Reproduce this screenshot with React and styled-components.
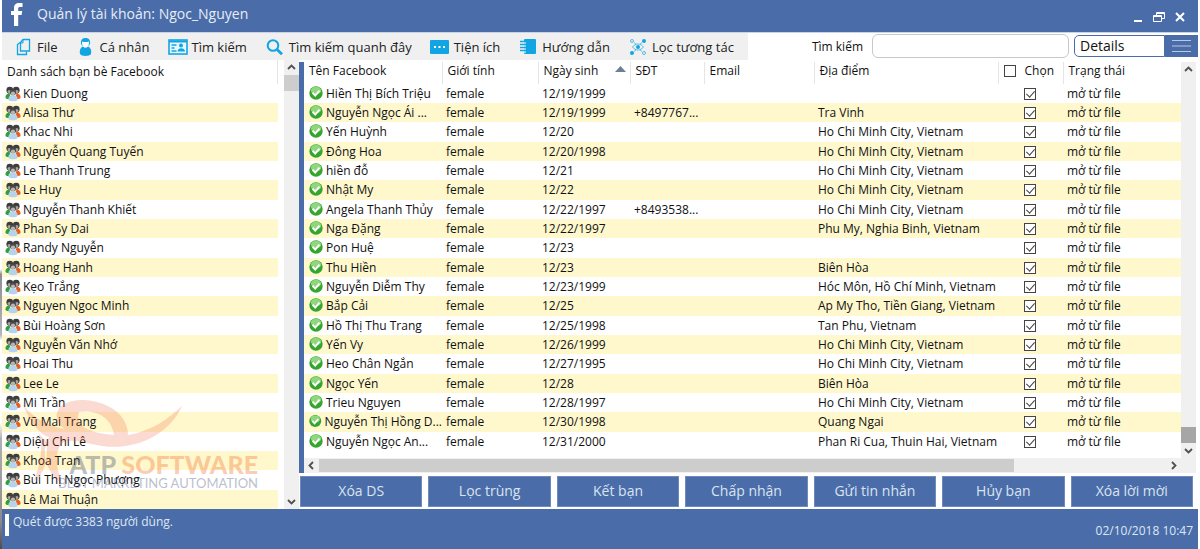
import React from "react";
import styled, { createGlobalStyle } from "styled-components";

const BLUE = "#4a6da9";
const YELLOW = "#fff8cd";
const GRAY = "#f0f0f0";
const CYAN = "#12a5e4";
const LINE = "#e5e5e5";

const GlobalStyle = createGlobalStyle`
  * {
    box-sizing: border-box;
  }

  body {
    margin: 0;
    background: #fff;
    color: #111;
    font-family: "Open Sans", "Noto Sans", sans-serif;
    font-size: 12px;
    line-height: 16px;
  }

  button,
  input,
  select {
    font-family: inherit;
    color: inherit;
  }
`;

const Window = styled.div`
  display: flex;
  flex-direction: column;
  min-height: 100vh;
  border: solid transparent;
  border-width: 0 2px;
  background:
    linear-gradient(#fff 49%, #8d8d92 50%, #b5b5ba 61%, #fff 62%, #fff 77%, #b0b0b4 80%, #8a8a8e 95%, #4b4b50) left / 2px 100% no-repeat border-box,
    #fff;
`;

const TitleBar = styled.header`
  display: flex;
  align-items: center;
  height: 33px;
  padding: 0 12px 4px 8px;
  background: ${BLUE};
  border-bottom: 1px solid #c9d3e6;
  color: #e6ecf6;
`;

const Title = styled.h1`
  flex: 1;
  margin: 0 0 0 13px;
  font-size: 14px;
  font-weight: 400;
  line-height: 20px;
`;

const WindowButtons = styled.div`
  display: flex;
  gap: 8px;
  padding-top: 6px;
`;

const PlainButton = styled.button`
  display: flex;
  align-items: center;
  justify-content: center;
  padding: 0;
  border: 0;
  background: none;
`;

const TopRow = styled.div`
  display: flex;
  height: 27px;
`;

const Menu = styled.nav`
  display: flex;
  align-items: center;
  gap: 18px;
  padding: 0 14px 0 11px;
  background: ${GRAY};
`;

const MenuButton = styled(PlainButton)`
  gap: 4px;
  color: #222;
  font-size: 13px;
  line-height: 20px;
  white-space: nowrap;
`;

const SearchBar = styled.form`
  display: flex;
  flex: 1;
  align-items: flex-start;
  justify-content: flex-end;
  padding-top: 1px;
`;

const SearchLabel = styled.label`
  margin-right: 9px;
  line-height: 26px;
`;

const SearchInput = styled.input`
  width: 197px;
  height: 24px;
  margin-right: 5px;
  border: 1px solid #c8c8c8;
  border-radius: 6px;
  background: #fff;
`;

const ViewSelect = styled.select`
  appearance: none;
  width: 91px;
  height: 22px;
  margin-top: 1px;
  padding: 0 5px;
  border: 1px solid ${BLUE};
  border-radius: 5px 0 0 5px;
  background: #fff;
  font-size: 14px;
  line-height: 20px;
`;

const MenuToggle = styled(PlainButton)`
  width: 33px;
  height: 22px;
  margin-top: 1px;
  background: ${BLUE};
`;

const Body = styled.main`
  display: flex;
`;

const FriendsPane = styled.section`
  position: relative;
  display: flex;
  flex: 0 0 297px;
`;

const FriendsColumn = styled.div`
  flex: 1;
  margin-right: 6px;
`;

const FriendsHeader = styled.h2`
  height: 24px;
  margin: 0;
  padding-left: 5px;
  border-right: 1px solid ${LINE};
  font-size: 12px;
  font-weight: 400;
  line-height: 24px;
`;

const FriendList = styled.ul`
  margin: 0;
  padding: 0;
  list-style: none;
`;

const Friend = styled.li`
  display: flex;
  align-items: center;
  gap: 2px;
  height: 19px;
  padding-left: 3px;
  line-height: 20px;

  &:nth-child(3n) {
    height: 20px;
  }

  &:nth-child(even) {
    background: ${YELLOW};
  }
`;

const Watermark = styled.div`
  position: absolute;
  left: 20px;
  bottom: 18px;
  width: 240px;
  pointer-events: none;
`;

const WatermarkText = styled.div`
  position: absolute;
  right: 4px;
  bottom: 0;
  font-family: Lato, sans-serif;
  text-align: right;
  white-space: nowrap;
  opacity: 0.32;
`;

const WatermarkName = styled.div`
  color: #f26522;
  font-size: 25px;
  font-weight: 900;
  line-height: 22px;

  span {
    color: #2b3a67;
  }
`;

const WatermarkTag = styled.div`
  color: #2b3a67;
  font-size: 13px;
  line-height: 16px;
`;

const VScroll = styled.div`
  display: flex;
  flex: 0 0 15px;
  flex-direction: column;
  justify-content: space-between;
  background: ${GRAY};
`;

const ScrollGroup = styled.div`
  display: flex;
  flex-direction: column;
`;

const ScrollButton = styled(PlainButton)`
  width: 15px;
  height: 15px;
`;

const VThumb = styled.div`
  height: 16px;
  background: ${(p) => (p.$dark ? "#a6a6a6" : "#cdcdcd")};
`;

const HScroll = styled.div`
  display: flex;
  align-items: center;
  height: 15px;
  padding-right: 15px;
  background: ${GRAY};
`;

const HTrack = styled.div`
  flex: 1;
  height: 13px;
`;

const HThumb = styled.div`
  width: 82%;
  height: 100%;
  background: #cdcdcd;
`;

const MembersPane = styled.section`
  flex: 1;
  min-width: 0;
  padding-top: 2px;
`;

const GridFrame = styled.div`
  margin-right: 2px;
  border-left: 5px solid ${BLUE};
`;

const GridRow = styled.div`
  display: flex;
`;

const TableWrap = styled.div`
  flex: 1;
  min-width: 0;
  padding-bottom: 7px;
`;

const Table = styled.table`
  width: 100%;
  border-collapse: collapse;
  table-layout: fixed;
`;

const Th = styled.th`
  width: ${(p) => p.$width || "auto"};
  height: 22px;
  padding: 0 4px 4px 5px;
  border-right: ${(p) => (p.$last ? "0" : `1px solid ${LINE}`)};
  font-weight: 400;
  line-height: 16px;
  text-align: left;
  white-space: nowrap;
`;

const HeadLine = styled.span`
  display: flex;
  align-items: center;
  justify-content: ${(p) => (p.$spread ? "space-between" : "flex-start")};
  gap: 9px;
`;

const Tr = styled.tr`
  height: 19px;

  &:nth-child(3n) {
    height: 20px;
  }

  &:nth-child(even) {
    background: ${YELLOW};
  }
`;

const Td = styled.td`
  padding: 0 0 0 ${(p) => p.$indent || "4px"};
  overflow: hidden;
  line-height: 18px;
  white-space: nowrap;
`;

const NameCell = styled.span`
  display: flex;
  align-items: center;
  gap: 3px;
`;

const Check = styled.input`
  appearance: none;
  position: relative;
  display: block;
  width: 12px;
  height: 12px;
  margin: 0;
  border: 1px solid #444;
  background: #fff;

  &:checked::after {
    content: "";
    position: absolute;
    left: 3px;
    top: 0;
    width: 4px;
    height: 7px;
    border: solid #444;
    border-width: 0 1px 1px 0;
    transform: rotate(42deg);
  }
`;

const Actions = styled.div`
  display: flex;
  gap: 6px;
  padding: 3px 5px 2px 1px;
`;

const ActionButton = styled.button`
  flex: 1;
  height: 31px;
  padding: 0 0 2px;
  border: 1px solid #6f8bbd;
  background: ${BLUE};
  color: #dbe3f1;
  font-size: 14px;
  line-height: 20px;
`;

const StatusBar = styled.footer`
  display: flex;
  flex: 1;
  justify-content: space-between;
  padding: 5px 5px 10px 3px;
  background: ${BLUE};
  color: #dfe6f3;
`;

const StatusText = styled.p`
  height: 22px;
  margin: 0;
  padding-left: 4px;
  border-left: 4px solid #fff;
`;

const Clock = styled.time`
  align-self: flex-end;
`;

const FacebookIcon = () => (
  <svg width="14" height="24" viewBox="0 0 14 24" aria-hidden="true">
    <path
      d="M4 24V13H1V9h3V6.200C4 2.500 6 1 9 1h3.500v4H10C8.600 5 8.200 5.600 8.200 6.800V9h4l-.6 4H8.200v11z"
      fill="#fff"
    />
  </svg>
);

const FileIcon = () => (
  <svg width="20" height="18" viewBox="0 0 20 18" fill="none" stroke={CYAN} aria-hidden="true">
    <path d="M10 1.500h6.500v11.500H7.500V4.500z" strokeWidth="1.300" />
    <path d="M7 4.500L4.500 6.500v10h9V13.500" strokeWidth="1.300" />
    <path d="M7.500 5H10V2" strokeWidth="1" />
  </svg>
);

const PersonIcon = () => (
  <svg width="20" height="20" viewBox="0 0 20 20" aria-hidden="true">
    <path d="M5 7C4.600 3 6 1 9.500 1S14.400 3 14 7l-1.500 2h-6z" fill={CYAN} />
    <path d="M6 4.500c1.500.8 5 .8 7 0 .3 3.500-1 6-3.500 6S5.800 8 6 4.500z" fill="#fff" />
    <path d="M4 17c-.8-4 .4-6.500 3-7.500 1.500 1.800 3.500 1.800 5 0 2.600 1 3.800 3.500 3 7.500-1.500 2.600-9.500 2.600-11 0z" fill={CYAN} />
  </svg>
);

const CardIcon = () => (
  <svg width="20" height="16" viewBox="0 0 20 16" aria-hidden="true">
    <rect x="1" y="1" width="18" height="14" fill="#e8f7fe" stroke={CYAN} strokeWidth="1.600" />
    <path d="M1 2.500h18" stroke={CYAN} strokeWidth="2" />
    <path d="M3.500 6h5M3.500 9h3M3.500 12h5" stroke={CYAN} strokeWidth="1.300" />
    <circle cx="13" cy="6.500" r="2" fill={CYAN} />
    <path d="M9.500 12.500c0-4.500 7.500-4.500 7.500 0z" fill={CYAN} />
  </svg>
);

const SearchIcon = () => (
  <svg width="20" height="18" viewBox="0 0 20 18" fill="none" stroke={CYAN} aria-hidden="true">
    <circle cx="8" cy="7.500" r="5.300" strokeWidth="2" />
    <path d="M12 11.500l5 4.800" strokeWidth="2.800" />
  </svg>
);

const DotsIcon = () => (
  <svg width="20" height="14" viewBox="0 0 20 14" aria-hidden="true">
    <rect width="19" height="14" y="0" rx="1" fill={CYAN} />
    <path d="M4 6h2v2H4zM8.500 6h2v2h-2zM13 6h2v2h-2z" fill="#fff" />
  </svg>
);

const BookIcon = () => (
  <svg width="20" height="17" viewBox="0 0 20 17" aria-hidden="true">
    <rect x="6" y="1" width="12" height="15" rx="1" fill={CYAN} />
    <path d="M2 3.500h5M2 6.500h5M2 9.500h5M2 12.500h5" stroke={CYAN} strokeWidth="1.400" />
    <path d="M5.500 5h2.500M5.500 8h2.500M5.500 11h2.500M5.500 14h2.500" stroke="#fff" strokeWidth="1" />
  </svg>
);

const NetworkIcon = () => (
  <svg width="20" height="18" viewBox="0 0 20 18" fill="none" stroke={CYAN} aria-hidden="true">
    <path d="M4.500 9c3-4 8-4 11 0-3 4-8 4-11 0z" strokeWidth=".7" />
    <path d="M6 4.500l2 1.500M14 13.500l-2-1.500M14 4.500l-2 1.500M6 13.500l2-1.500" strokeWidth=".6" />
    <circle cx="10" cy="9" r="2" fill={CYAN} stroke="none" />
    <circle cx="4" cy="3" r="1.500" strokeWidth=".7" />
    <circle cx="16" cy="15" r="1.500" strokeWidth=".7" />
    <circle cx="16" cy="3" r="2" fill={CYAN} stroke="none" />
    <circle cx="4" cy="15" r="2" fill={CYAN} stroke="none" />
  </svg>
);

const PeopleIcon = () => (
  <svg width="16" height="16" viewBox="0 0 16 16" aria-hidden="true">
    <path d="M.5 12c-.3-3 1.300-4.500 4-4.500L6 12.500C4 13.300 1.500 13.200.5 12z" fill="#2f9e3c" />
    <path d="M15.500 12c.3-3-1.300-4.500-4-4.500L10 12.500c2 .8 4.500.7 5.500-.5z" fill="#ea5b1c" />
    <circle cx="4.800" cy="4.200" r="3.400" fill="#3d3d3d" />
    <circle cx="11.200" cy="4.200" r="3.400" fill="#3d3d3d" />
    <ellipse cx="4.200" cy="5.600" rx="1.600" ry="1.500" fill="#aaa5a2" />
    <ellipse cx="11.800" cy="5.600" rx="1.600" ry="1.500" fill="#aaa5a2" />
    <circle cx="8" cy="6.600" r="3" fill="#4a4a4a" />
    <circle cx="8" cy="7.600" r="2.100" fill="#b9b4b1" />
    <path d="M3.300 13.700c0-3.200 1.500-4.500 4.700-4.500s4.700 1.300 4.700 4.500c-1.500 2-7.900 2-9.400 0z" fill="#b5d3ec" />
  </svg>
);

const OkIcon = () => (
  <svg width="14" height="16" viewBox="0 0 14 16" aria-hidden="true">
    <circle cx="7" cy="7" r="6.700" fill="#35a52e" />
    <ellipse cx="7" cy="4.600" rx="5.200" ry="3.800" fill="#8fd67c" />
    <path d="M3.600 6.800l2.600 2.800 4.300-5" fill="none" stroke="#fff" strokeWidth="2" />
  </svg>
);

const ARROWS = {
  up: "M4 9l3.500-3.500L11 9",
  down: "M4 6l3.500 3.500L11 6",
  left: "M9 4L5.500 7.500 9 11",
  right: "M6 4l3.500 3.500L6 11",
};

const Arrow = ({ dir }) => (
  <svg width="15" height="15" viewBox="0 0 15 15" aria-hidden="true">
    <path d={ARROWS[dir]} fill="none" stroke="#505050" strokeWidth="1.800" />
  </svg>
);

const WatermarkLogo = () => (
  <svg width="240" height="90" viewBox="0 0 240 90" opacity=".2" aria-hidden="true">
    <path
      fill="#f04a26"
      fillRule="evenodd"
      d="M1 8C12 22 26 28 42 32C26 17 38 2 62 3C90 5 106 20 106 38C130 34 146 22 160 9C148 36 116 54 80 49C56 45 38 36 35 58C34 68 37 78 40 87C24 74 18 56 27 40C16 37 7 22 1 8ZM57 15C52 28 66 36 92 38C90 22 76 12 57 15ZM16 36C22 46 19 66 12 84C22 78 27 62 24 44Z"
    />
  </svg>
);

const MENU = [
  ["File", FileIcon],
  ["Cá nhân", PersonIcon],
  ["Tìm kiếm", CardIcon],
  ["Tìm kiếm quanh đây", SearchIcon],
  ["Tiện ích", DotsIcon],
  ["Hướng dẫn", BookIcon],
  ["Lọc tương tác", NetworkIcon],
];

const FRIENDS = [
  "Kien Duong",
  "Alisa Thư",
  "Khac Nhi",
  "Nguyễn Quang Tuyến",
  "Le Thanh Trung",
  "Le Huy",
  "Nguyễn Thanh Khiết",
  "Phan Sy Dai",
  "Randy Nguyễn",
  "Hoang Hanh",
  "Kẹo Trắng",
  "Nguyen Ngoc Minh",
  "Bùi Hoàng Sơn",
  "Nguyễn Văn Nhớ",
  "Hoai Thu",
  "Lee Le",
  "Mi Trần",
  "Vũ Mai Trang",
  "Diệu Chi Lê",
  "Khoa Tran",
  "Bùi Thị Ngọc Phượng",
  "Lê Mai Thuận",
];

const HCM = "Ho Chi Minh City, Vietnam";

// name, birthday, phone, place
const MEMBERS = [
  ["Hiền Thị Bích Triệu", "12/19/1999", "", ""],
  ["Nguyễn Ngọc Ái ...", "12/19/1999", "+8497767...", "Tra Vinh"],
  ["Yến Huỳnh", "12/20", "", HCM],
  ["Đông Hoa", "12/20/1998", "", HCM],
  ["hiền đỗ", "12/21", "", HCM],
  ["Nhật My", "12/22", "", HCM],
  ["Angela Thanh Thủy", "12/22/1997", "+8493538...", HCM],
  ["Nga Đặng", "12/22/1997", "", "Phu My, Nghia Binh, Vietnam"],
  ["Pon Huệ", "12/23", "", ""],
  ["Thu Hiền", "12/23", "", "Biên Hòa"],
  ["Nguyễn Diễm Thy", "12/23/1999", "", "Hóc Môn, Hồ Chí Minh, Vietnam"],
  ["Bắp Cải", "12/25", "", "Ap My Tho, Tiền Giang, Vietnam"],
  ["Hồ Thị Thu Trang", "12/25/1998", "", "Tan Phu, Vietnam"],
  ["Yến Vy", "12/26/1999", "", HCM],
  ["Heo Chân Ngắn", "12/27/1995", "", HCM],
  ["Ngọc Yến", "12/28", "", "Biên Hòa"],
  ["Trieu Nguyen", "12/28/1997", "", HCM],
  ["Nguyễn Thị Hồng D...", "12/30/1998", "", "Quang Ngai"],
  ["Nguyễn Ngọc An...", "12/31/2000", "", "Phan Ri Cua, Thuin Hai, Vietnam"],
];

const ACTIONS = ["Xóa DS", "Lọc trùng", "Kết bạn", "Chấp nhận", "Gửi tin nhắn", "Hủy bạn", "Xóa lời mời"];

const FriendsPanel = () => (
  <FriendsPane>
    <FriendsColumn>
      <FriendsHeader>Danh sách bạn bè Facebook</FriendsHeader>
      <FriendList>
        {FRIENDS.map((name) => (
          <Friend key={name}>
            <PeopleIcon />
            {name}
          </Friend>
        ))}
      </FriendList>
    </FriendsColumn>
    <VScroll>
      <ScrollGroup>
        <ScrollButton type="button" aria-label="Lên">
          <Arrow dir="up" />
        </ScrollButton>
        <VThumb />
      </ScrollGroup>
      <ScrollButton type="button" aria-label="Xuống">
        <Arrow dir="down" />
      </ScrollButton>
    </VScroll>
    <Watermark>
      <WatermarkLogo />
      <WatermarkText>
        <WatermarkName>
          <span>ATP</span> SOFTWARE
        </WatermarkName>
        <WatermarkTag>BEST MARKETING AUTOMATION</WatermarkTag>
      </WatermarkText>
    </Watermark>
  </FriendsPane>
);

const MembersTable = () => (
  <Table>
    <thead>
      <tr>
        <Th $width="138px">Tên Facebook</Th>
        <Th $width="96px">Giới tính</Th>
        <Th $width="92px">
          <HeadLine $spread>
            Ngày sinh
            <svg width="11" height="10" viewBox="0 0 11 10" aria-hidden="true">
              <path d="M0 6l5.500-6L11 6z" fill="#6d7f95" />
            </svg>
          </HeadLine>
        </Th>
        <Th $width="74px">SĐT</Th>
        <Th $width="110px">Email</Th>
        <Th>Địa điểm</Th>
        <Th $width="65px">
          <HeadLine>
            <Check type="checkbox" id="check-all" />
            <label htmlFor="check-all">Chọn</label>
          </HeadLine>
        </Th>
        <Th $width="118px" $last>
          Trạng thái
        </Th>
      </tr>
    </thead>
    <tbody>
      {MEMBERS.map(([name, birthday, phone, place]) => (
        <Tr key={name}>
          <Td $indent="5px">
            <NameCell>
              <OkIcon />
              {name}
            </NameCell>
          </Td>
          <Td>female</Td>
          <Td>{birthday}</Td>
          <Td>{phone}</Td>
          <Td />
          <Td>{place}</Td>
          <Td $indent="26px">
            <Check type="checkbox" defaultChecked aria-label={name} />
          </Td>
          <Td>mở từ file</Td>
        </Tr>
      ))}
    </tbody>
  </Table>
);

const App = () => (
  <>
    <GlobalStyle />
    <Window>
      <TitleBar>
        <FacebookIcon />
        <Title>Quản lý tài khoản: Ngoc_Nguyen</Title>
        <WindowButtons>
          <PlainButton type="button" aria-label="Thu nhỏ">
            <svg width="12" height="14" viewBox="0 0 12 14" aria-hidden="true">
              <path d="M2 11h8" stroke="#fff" strokeWidth="2" />
            </svg>
          </PlainButton>
          <PlainButton type="button" aria-label="Khôi phục">
            <svg width="14" height="14" viewBox="0 0 14 14" fill="none" stroke="#fff" aria-hidden="true">
              <path d="M4.500 5V2.500h8v6H10M4.500 3.500h8M1.500 5.500h8v6h-8zM1.500 6.500h8" />
            </svg>
          </PlainButton>
          <PlainButton type="button" aria-label="Đóng">
            <svg width="12" height="14" viewBox="0 0 12 14" aria-hidden="true">
              <path d="M2 3l8 8M10 3l-8 8" stroke="#fff" strokeWidth="2" />
            </svg>
          </PlainButton>
        </WindowButtons>
      </TitleBar>

      <TopRow>
        <Menu>
          {MENU.map(([label, Icon]) => (
            <MenuButton key={label} type="button">
              <Icon />
              {label}
            </MenuButton>
          ))}
        </Menu>
        <SearchBar onSubmit={(e) => e.preventDefault()}>
          <SearchLabel htmlFor="search">Tìm kiếm</SearchLabel>
          <SearchInput id="search" type="text" />
          <ViewSelect aria-label="Details" defaultValue="details">
            <option value="details">Details</option>
          </ViewSelect>
          <MenuToggle type="button" aria-label="Menu">
            <svg width="19" height="14" viewBox="0 0 19 14" aria-hidden="true">
              <path d="M0 1.500h19M0 7h19M0 12.500h19" stroke="#b9c8e2" />
            </svg>
          </MenuToggle>
        </SearchBar>
      </TopRow>

      <Body>
        <FriendsPanel />
        <MembersPane>
          <GridFrame>
            <GridRow>
              <TableWrap>
                <MembersTable />
              </TableWrap>
              <VScroll>
                <ScrollButton type="button" aria-label="Lên">
                  <Arrow dir="up" />
                </ScrollButton>
                <ScrollGroup>
                  <VThumb $dark />
                  <ScrollButton type="button" aria-label="Xuống">
                    <Arrow dir="down" />
                  </ScrollButton>
                </ScrollGroup>
              </VScroll>
            </GridRow>
            <HScroll>
              <ScrollButton type="button" aria-label="Trái">
                <Arrow dir="left" />
              </ScrollButton>
              <HTrack>
                <HThumb />
              </HTrack>
              <ScrollButton type="button" aria-label="Phải">
                <Arrow dir="right" />
              </ScrollButton>
            </HScroll>
          </GridFrame>
          <Actions>
            {ACTIONS.map((label) => (
              <ActionButton key={label} type="button">
                {label}
              </ActionButton>
            ))}
          </Actions>
        </MembersPane>
      </Body>

      <StatusBar>
        <StatusText>Quét được 3383 người dùng.</StatusText>
        <Clock dateTime="2018-10-02T10:47">02/10/2018 10:47</Clock>
      </StatusBar>
    </Window>
  </>
);

export default App;
